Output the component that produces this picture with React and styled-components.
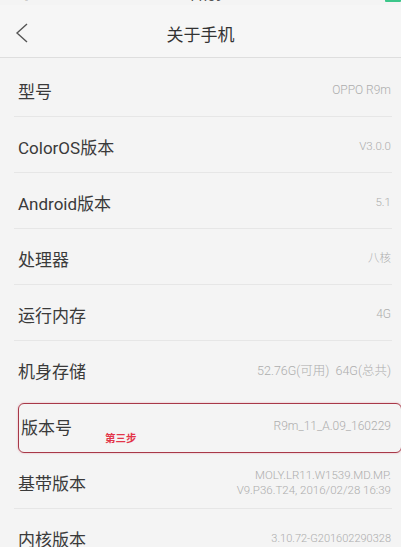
import React from 'react';
import styled, { createGlobalStyle } from 'styled-components';

const GlobalStyle = createGlobalStyle`
  html, body {
    margin: 0;
    padding: 0;
    background: #f4f4f4;
  }
  body {
    font-family: Roboto, "Noto Sans CJK SC", sans-serif;
    overflow: hidden;
  }
`;

const Page = styled.div`
  width: 401px;
  height: 547px;
  overflow: hidden;
  background: #f4f4f4;
`;

const StatusBar = styled.div`
  height: 5px;
  overflow: hidden;
  color: #555;
`;

const StatusInner = styled.div`
  display: grid;
  grid-template-columns: 1fr auto 1fr;
  align-items: end;
  height: 18px;
  margin-top: -13px;
  padding: 0 0 0 6px;
  font-size: 14px;
  line-height: 18px;
`;

const Signal = styled.span`
  font-size: 12px;
`;

const Time = styled.span`
  justify-self: center;
  margin-left: 4px;
`;

const Battery = styled.span`
  justify-self: end;
  width: 16px;
  height: 10px;
  margin-bottom: 3px;
  background: #3cc68a;
  border-radius: 1px;
`;

const NavBar = styled.div`
  position: relative;
  height: 52px;
  display: flex;
  align-items: center;
  justify-content: center;
  background: #f6f6f6;
  border-bottom: 1px solid #dedede;
`;

const BackButton = styled.div`
  position: absolute;
  left: 12px;
  top: 16px;
  width: 20px;
  height: 24px;
  display: flex;
  align-items: center;
  justify-content: center;
`;

const Title = styled.div`
  font-family: "Noto Sans CJK SC", sans-serif;
  font-size: 17px;
  color: #333;
  margin-top: 4px;
`;

const List = styled.div`
  padding: 3px 9px 0 14px;
`;

const Row = styled.div`
  position: relative;
  height: 56px;
  box-sizing: border-box;
  padding: 4px 1px 0 4px;
  display: flex;
  align-items: center;
  justify-content: space-between;
  border-bottom: 1px solid ${p => (p.$plain ? 'transparent' : '#e6e6e6')};
`;

const Label = styled.div`
  font-family: Roboto, "Noto Sans CJK SC", sans-serif;
  font-size: 17px;
  color: #3a3a3a;
  margin-left: ${p => p.$shift || 0}px;
`;

const Value = styled.div`
  font-family: Roboto, "Noto Sans CJK SC", sans-serif;
  font-weight: 300;
  font-size: ${p => p.$size || 11.5}px;
  line-height: 15px;
  color: #adadad;
  text-align: right;
  white-space: pre;
`;

const Highlight = styled.div`
  position: absolute;
  left: 4px;
  right: -10px;
  top: 6px;
  height: 50px;
  box-sizing: border-box;
  border: 1.5px solid #a83848;
  border-radius: 6px;
  box-shadow: 0 0 2px rgba(220, 90, 110, 0.5);
  pointer-events: none;
`;

const Step = styled.span`
  position: absolute;
  left: 91px;
  top: 33px;
  font-family: "Noto Sans CJK SC", sans-serif;
  font-weight: 700;
  font-size: 10.5px;
  color: #e3364a;
`;

const rows = [
  { label: '型号', value: 'OPPO R9m', size: 12 },
  { label: 'ColorOS版本', value: 'V3.0.0' },
  { label: 'Android版本', value: '5.1' },
  { label: '处理器', value: '八核' },
  { label: '运行内存', value: '4G', size: 12 },
  { label: '机身存储', value: '52.76G(可用)  64G(总共)', size: 12.5 },
  { label: '版本号', value: 'R9m_11_A.09_160229', size: 12, step: true },
  { label: '基带版本', value: 'MOLY.LR11.W1539.MD.MP.\nV9.P36.T24, 2016/02/28 16:39' },
  { label: '内核版本', value: '3.10.72-G201602290328', size: 11 },
];

export default function App() {
  return (
    <Page>
      <GlobalStyle />
      <StatusBar>
        <StatusInner>
          <Signal>▥ ᯤ</Signal>
          <Time>11:59</Time>
          <Battery />
        </StatusInner>
      </StatusBar>
      <NavBar>
        <BackButton>
          <svg width="14" height="20" viewBox="0 0 14 20">
            <path d="M12 1 L2 10 L12 19" fill="none" stroke="#555" strokeWidth="1.4" />
          </svg>
        </BackButton>
        <Title>关于手机</Title>
      </NavBar>
      <List>
        {rows.map((r, i) => (
          <Row key={r.label} $plain={r.step || i === 5}>
            <Label $shift={r.step ? 3 : 0}>{r.label}</Label>
            <Value $size={r.size}>{r.value}</Value>
            {r.step && (
              <>
                <Highlight />
                <Step>第三步</Step>
              </>
            )}
          </Row>
        ))}
      </List>
    </Page>
  );
}
